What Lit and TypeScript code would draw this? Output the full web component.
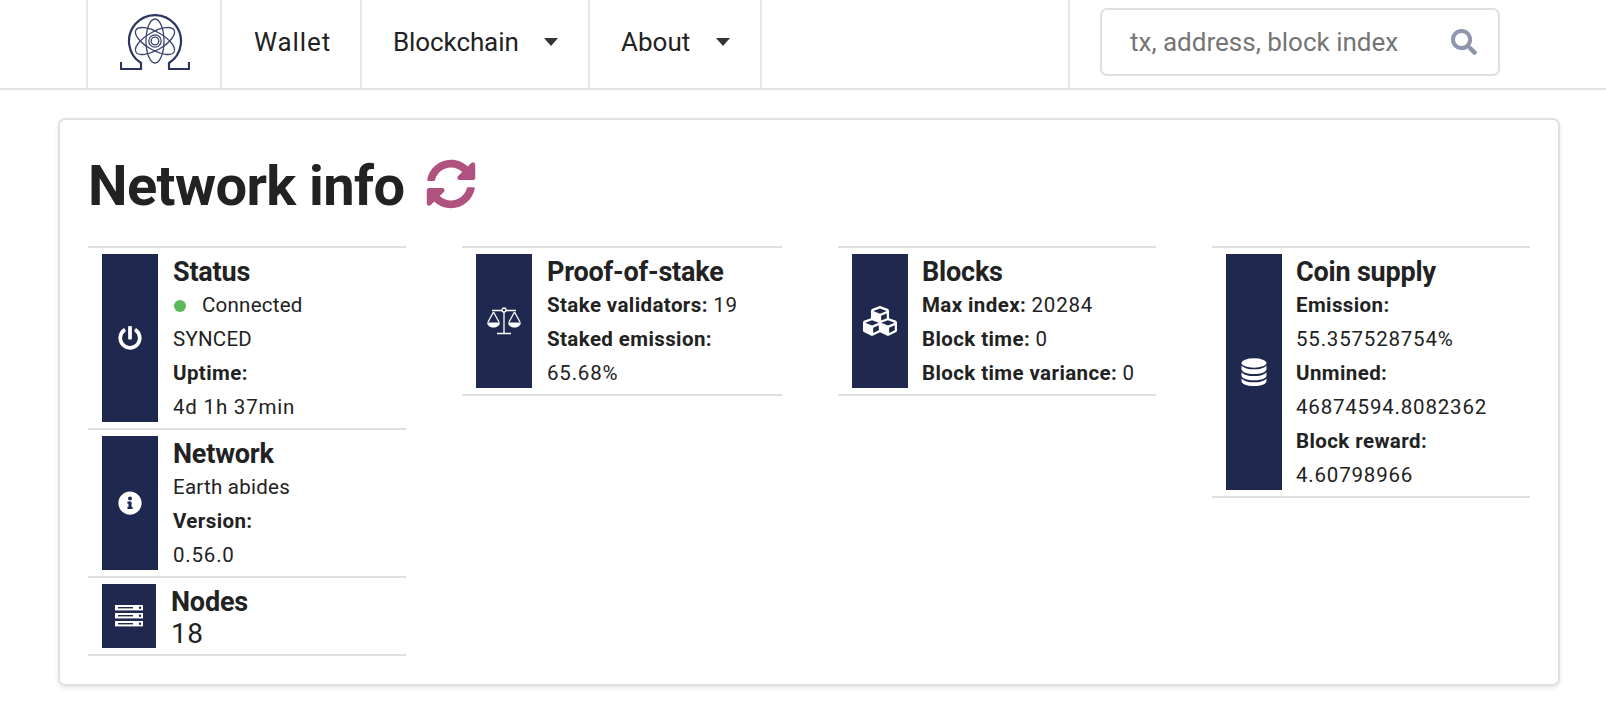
import { LitElement, html, css, svg } from "lit";
import { customElement } from "lit/decorators.js";

const P = {
  sync: "M370.72 133.28C339.458 104.008 298.888 87.962 255.848 88c-77.458.068-144.328 53.178-162.791 126.85-1.344 5.363-6.122 9.15-11.651 9.15H24.103c-7.498 0-13.194-6.807-11.807-14.176C33.933 94.924 134.813 8 256 8c66.448 0 126.791 26.136 171.315 68.685L463.03 40.97C478.149 25.851 504 36.559 504 57.941V192c0 13.255-10.745 24-24 24H345.941c-21.382 0-32.09-25.851-16.971-40.971l41.75-41.749zM32 296h134.059c21.382 0 32.09 25.851 16.971 40.971l-41.75 41.75c31.262 29.273 71.835 45.319 114.876 45.28 77.418-.07 144.315-53.144 162.787-126.849 1.344-5.363 6.122-9.15 11.651-9.15h57.304c7.498 0 13.194 6.807 11.807 14.176C478.067 417.076 377.187 504 256 504c-66.448 0-126.791-26.136-171.315-68.685L48.97 471.03C33.851 486.149 8 475.441 8 454.059V320c0-13.255 10.745-24 24-24z",
  power: "M400 54.1c63 45 104 118.6 104 201.9 0 136.8-110.8 247.7-247.5 248C120 504.3 8.2 393 8 256.4 7.9 173.1 48.9 99.3 111.8 54.2c11.7-8.3 28-4.8 35 7.7L162.6 90c5.9 10.5 3.1 23.8-6.6 31-41.5 30.8-68 79.6-68 134.9-.1 92.3 74.5 168.1 168 168.1 91.6 0 168.6-74.2 168-169.1-.3-51.8-24.7-101.8-68.1-134-9.7-7.2-12.4-20.5-6.5-30.9l15.8-28.1c7-12.4 23.2-16.1 34.8-7.8zM296 264V24c0-13.3-10.7-24-24-24h-32c-13.3 0-24 10.7-24 24v240c0 13.3 10.7 24 24 24h32c13.3 0 24-10.7 24-24z",
  info: "M256 8C119.043 8 8 119.083 8 256c0 136.997 111.043 248 248 248s248-111.003 248-248C504 119.083 392.957 8 256 8zm0 110c23.196 0 42 18.804 42 42s-18.804 42-42 42-42-18.804-42-42 18.804-42 42-42zm56 254c0 6.627-5.373 12-12 12h-88c-6.627 0-12-5.373-12-12v-24c0-6.627 5.373-12 12-12h12v-64h-12c-6.627 0-12-5.373-12-12v-24c0-6.627 5.373-12 12-12h64c6.627 0 12 5.373 12 12v100h12c6.627 0 12 5.373 12 12v24z",
  search: "M505 442.7L405.3 343c-4.5-4.5-10.6-7-17-7H372c27.6-35.3 44-79.7 44-128C416 93.1 322.9 0 208 0S0 93.1 0 208s93.1 208 208 208c48.3 0 92.7-16.4 128-44v16.3c0 6.4 2.5 12.5 7 17l99.7 99.7c9.4 9.4 24.6 9.4 33.9 0l28.3-28.3c9.4-9.4 9.4-24.6.1-34zM208 336c-70.7 0-128-57.2-128-128 0-70.7 57.2-128 128-128 70.7 0 128 57.2 128 128 0 70.7-57.2 128-128 128z",
  cubes: "M488.6 250.2L392 214V105.5c0-15-9.3-28.4-23.4-33.7l-100-37.5c-8.1-3.1-17.1-3.1-25.3 0l-100 37.5c-14.1 5.3-23.4 18.7-23.4 33.7V214l-96.6 36.2C9.3 255.5 0 268.9 0 283.9V394c0 13.6 7.7 26.1 19.9 32.2l100 50c10.1 5.1 22.1 5.1 32.2 0l103.9-52 103.9 52c10.1 5.1 22.1 5.1 32.2 0l100-50c12.2-6.1 19.9-18.6 19.9-32.2V283.9c0-15-9.3-28.4-23.4-33.7zM358 214.8l-85 31.9v-68.2l85-37v73.3zM154 104.1l102-38.2 102 38.2v.6l-102 41.4-102-41.4v-.6zm84 291.1l-85 42.5v-79.1l85-38.8v75.4zm0-112l-102 41.4-102-41.4v-.6l102-38.2 102 38.2v.6zm240 112l-85 42.5v-79.1l85-38.8v75.4zm0-112l-102 41.4-102-41.4v-.6l102-38.2 102 38.2v.6z",
};

const fa = (d: string, size: number, vb = "0 0 512 512") =>
  html`<svg class="ic" width=${size} height=${size} viewBox=${vb} fill="currentColor"><path d=${d}></path></svg>`;

const logo = html`<svg class="logo" width="70" height="56" viewBox="0 0 70 56" fill="none" stroke="#2a3560">
  <path stroke-width="2.2" d="M1 48 V55 H21 V49 A26 26 0 1 1 49 49 V55 H69 V48"></path>
  <g stroke-width="1.3" stroke="#3b4670">
    <ellipse cx="35" cy="27" rx="9" ry="22"></ellipse>
    <ellipse cx="35" cy="27" rx="9" ry="22" transform="rotate(60 35 27)"></ellipse>
    <ellipse cx="35" cy="27" rx="9" ry="22" transform="rotate(-60 35 27)"></ellipse>
    <circle cx="35" cy="27" r="6.2"></circle>
    <circle cx="35" cy="27" r="3.8"></circle>
  </g>
</svg>`;

const serverIcon = html`<svg width="28" height="22" viewBox="0 0 28 22">
  ${[0, 8, 16].map(
    (y) => svg`<rect x="0" y=${y} width="28" height="5.4" fill="#fff"></rect>
      <rect x="3" y=${y + 2} width="15" height="1.4" fill="#1f294f"></rect>
      <circle cx="25" cy=${y + 2.7} r="1.2" fill="#1f294f"></circle>`
  )}
</svg>`;

const scaleIcon = html`<svg width="36" height="28" viewBox="0 0 36 28" fill="none" stroke="#fff" stroke-width="1.3">
  <path d="M6 3.5 H30 M18 3.5 V26 M11 26.5 H25"></path>
  <circle cx="18" cy="3" r="2" fill="#1f294f"></circle>
  <path d="M7.5 5 L2 15 M7.5 5 L13 15 M28.500 5 L23 15 M28.500 5 L34 15"></path>
  <path fill="#fff" stroke="none" d="M1 15.500 H14 C13.500 19 11 20.500 7.500 20.500 S1.500 19 1 15.500 Z M22 15.500 H35 C34.500 19 32 20.500 28.500 20.500 S22.500 19 22 15.500 Z"></path>
</svg>`;

const dbIcon = html`<svg width="26" height="28" viewBox="0 0 26 28" fill="#fff">
  <ellipse cx="13" cy="5" rx="12.500" ry="4.700"></ellipse>
  <path d="M.5 7.500 C3 10.500 8 11.300 13 11.300 S23 10.500 25.500 7.500 V11 C25.500 14 20 16 13 16 S.5 14 .5 11 Z"></path>
  <path d="M.5 14.200 C3 17.200 8 18 13 18 S23 17.200 25.500 14.200 V17.500 C25.500 20.500 20 22.300 13 22.300 S.5 20.500 .5 17.500 Z"></path>
  <path d="M.5 20.500 C3 23.500 8 24.300 13 24.300 S23 23.500 25.500 20.500 V23 C25.500 26 20 28 13 28 S.5 26 .5 23 Z"></path>
</svg>`;

@customElement("app-root")
export class AppRoot extends LitElement {
  static styles = css`
    :host {
      display: block;
      font-family: "Roboto", "Liberation Sans", sans-serif;
      color: #222;
      background: #fff;
      height: 710px;
      font-size: 20px;
      overflow: hidden;
    }
    .nav {
      display: grid;
      grid-template-columns: 134px 140px 228px 172px 308px auto;
      height: 88px;
      padding-left: 86px;
      border-bottom: 2px solid #e3e3e3;
    }
    .nav > div {
      display: flex;
      align-items: center;
      border-left: 2px solid #e6e6e6;
      font-size: 26px;
      box-sizing: border-box;
      padding: 0 0 4px 31px;
    }
    .nav > .brand {
      padding: 0 0 5px 2px;
      justify-content: center;
    }
    .nav > .spacer {
      padding: 0;
    }
    .wallet {
      letter-spacing: 0.9px;
      margin-left: 1px;
    }
    .chain {
      letter-spacing: -0.1px;
    }
    .caret {
      width: 0;
      height: 0;
      border-left: 7px solid transparent;
      border-right: 7px solid transparent;
      border-top: 8px solid #333;
      margin-left: auto;
      margin-right: 30px;
    }
    .nav > .searchwrap {
      padding: 0 0 4px 30px;
    }
    .search {
      box-sizing: border-box;
      width: 400px;
      height: 68px;
      border: 2px solid #dedfe2;
      border-radius: 7px;
      display: flex;
      align-items: center;
      padding: 0 21px 0 28px;
      color: #757575;
      font-size: 26px;
      justify-content: space-between;
    }
    .search .ic {
      color: #8f95ab;
    }
    .card {
      box-sizing: border-box;
      margin: 28px 0 0 58px;
      width: 1502px;
      height: 568px;
      border: 2px solid #e0e0e0;
      border-radius: 7px;
      box-shadow: 0 2px 4px rgba(0, 0, 0, 0.1);
      padding: 28px 29px 0 28px;
    }
    h1 {
      margin: 0;
      height: 98px;
      display: flex;
      align-items: flex-start;
      gap: 22px;
      font-size: 56px;
      line-height: 76px;
      font-weight: 700;
      letter-spacing: -0.6px;
    }
    h1 .ic {
      color: #b0527f;
      margin-top: 11px;
    }
    .grid {
      display: grid;
      grid-template-columns: 318px 320px 318px 318px;
      column-gap: 56px;
      align-items: start;
    }
    .col {
      border-top: 2px solid #e0e0e0;
    }
    .item {
      display: flex;
      align-items: stretch;
      padding: 6px 14px;
      border-bottom: 2px solid #e0e0e0;
      gap: 15px;
    }
    .col.tight .item {
      gap: 14px;
    }
    .box {
      flex: 0 0 56px;
      width: 56px;
      background: #1f294f;
      color: #fff;
      display: flex;
      align-items: center;
      justify-content: center;
    }
    .item.nodes .box {
      flex-basis: 54px;
      width: 54px;
    }
    .text {
      padding-top: 1.5px;
      margin-bottom: -1.5px;
    }
    .title {
      font-size: 27px;
      font-weight: 700;
      line-height: 32px;
      letter-spacing: -0.2px;
    }
    .row {
      line-height: 34px;
      font-size: 20.5px;
      letter-spacing: 0.25px;
      white-space: nowrap;
    }
    .row b {
      font-weight: 700;
      letter-spacing: 0.4px;
    }
    .num {
      letter-spacing: 0.8px;
    }
    .big {
      font-size: 28px;
      line-height: 32px;
      letter-spacing: 0.5px;
    }
    .dot {
      display: inline-block;
      width: 12px;
      height: 12px;
      border-radius: 50%;
      background: #5cb85c;
      margin: 0 16px 0 1px;
    }
  `;

  item(icon: unknown, title: string, rows: unknown[]) {
    return html`<div class="item">
      <div class="box">${icon}</div>
      <div class="text">
        <div class="title">${title}</div>
        ${rows.map((r) => html`<div class="row">${r}</div>`)}
      </div>
    </div>`;
  }

  render() {
    const n = (t: string) => html`<span class="num">${t}</span>`;
    return html`
      <div class="nav">
        <div class="brand">${logo}</div>
        <div><span class="wallet">Wallet</span></div>
        <div><span class="chain">Blockchain</span><span class="caret"></span></div>
        <div>About<span class="caret"></span></div>
        <div class="spacer"></div>
        <div class="searchwrap">
          <div class="search"><span>tx, address, block index</span>${fa(P.search, 26)}</div>
        </div>
      </div>
      <div class="card">
        <h1>Network info ${fa(P.sync, 50)}</h1>
        <div class="grid">
          <div class="col">
            ${this.item(fa(P.power, 24), "Status", [
              html`<span class="dot"></span>Connected`,
              "SYNCED",
              html`<b>Uptime:</b>`,
              html`<span class="num">4d 1h 37min</span>`,
            ])}
            ${this.item(fa(P.info, 24), "Network", ["Earth abides", html`<b>Version:</b>`, n("0.56.0")])}
            <div class="item nodes">
              <div class="box">${serverIcon}</div>
              <div class="text">
                <div class="title">Nodes</div>
                <div class="big">18</div>
              </div>
            </div>
          </div>
          <div class="col">
            ${this.item(scaleIcon, "Proof-of-stake", [
              html`<b>Stake validators:</b> ${n("19")}`,
              html`<b>Staked emission:</b>`,
              n("65.68%"),
            ])}
          </div>
          <div class="col tight">
            ${this.item(fa(P.cubes, 34), "Blocks", [
              html`<b>Max index:</b> ${n("20284")}`,
              html`<b>Block time:</b> 0`,
              html`<b>Block time variance:</b> 0`,
            ])}
          </div>
          <div class="col tight">
            ${this.item(dbIcon, "Coin supply", [
              html`<b>Emission:</b>`,
              n("55.357528754%"),
              html`<b>Unmined:</b>`,
              n("46874594.8082362"),
              html`<b>Block reward:</b>`,
              n("4.60798966"),
            ])}
          </div>
        </div>
      </div>
    `;
  }
}
